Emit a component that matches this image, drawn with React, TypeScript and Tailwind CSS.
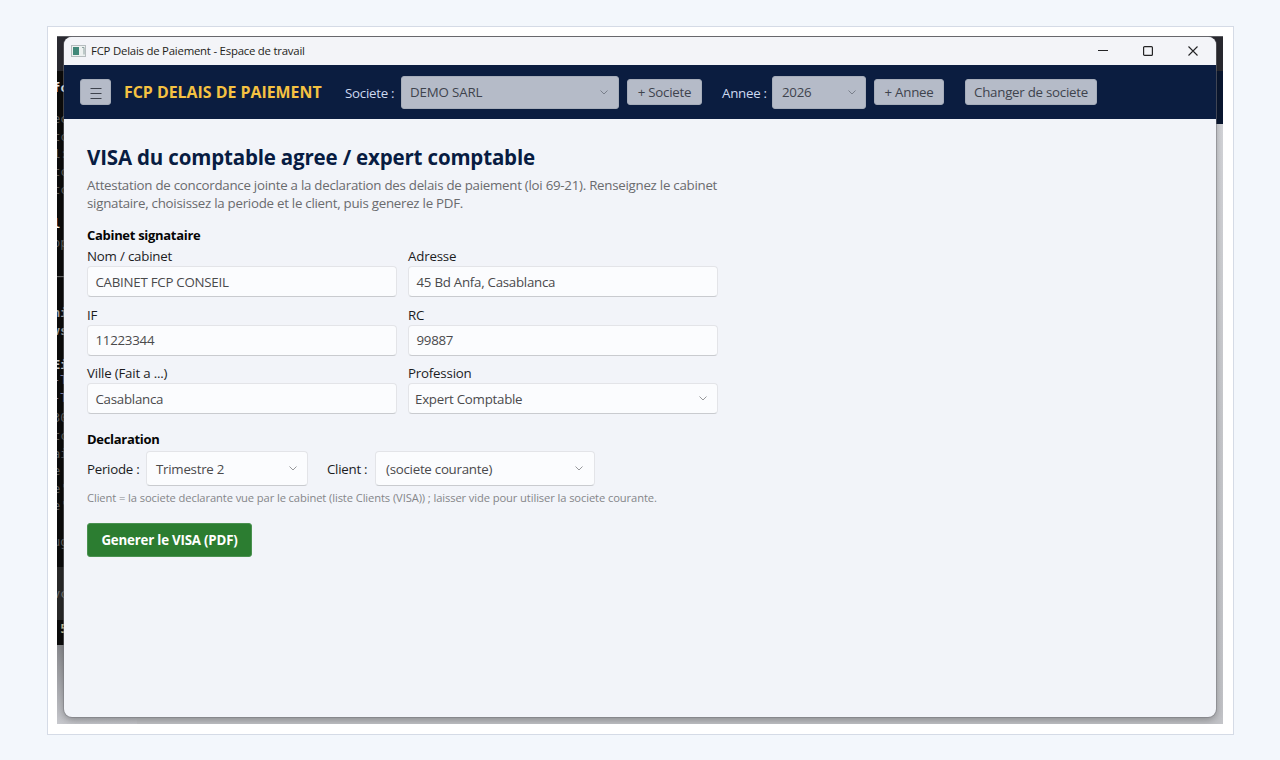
import type { ReactNode } from "react";

// Console lines that stick out on the left of the window
const consoleLines = [
  { y: 52, text: "fc", color: "#f2f2f2", bold: true },
  { y: 83, text: "ec", color: "#606060" },
  { y: 101, text: "tc", color: "#606060" },
  { y: 118, text: "1:", color: "#606060" },
  { y: 136, text: "tc", color: "#606060" },
  { y: 154, text: "tc", color: "#606060" },
  { y: 188, text: "l", color: "#ffffff", bold: true },
  { y: 207, text: "op", color: "#606060" },
  { y: 241, text: "──", color: "#777777" },
  { y: 277, text: "ni", color: "#a5a5a5", bold: true },
  { y: 295, text: "vs", color: "#a5a5a5", bold: true },
  { y: 329, text: "Ei", color: "#d0d0d0", bold: true },
  { y: 344, text: "-T", color: "#8585aa" },
  { y: 362, text: "-T", color: "#8585aa" },
  { y: 382, text: "30", color: "#606060" },
  { y: 400, text: "tc", color: "#606060" },
  { y: 418, text: "ai", color: "#606060" },
  { y: 435, text: "e", color: "#606060" },
  { y: 453, text: "e'", color: "#606060" },
  { y: 470, text: "e'", color: "#606060" },
  { y: 506, text: "ug", color: "#606060" },
  { y: 558, text: "vc", color: "#777777" },
  { y: 593, text: " 5", color: "#d8c89a", bold: true },
];

function Chevron({ className = "" }: { className?: string }) {
  return (
    <svg width="8" height="5" viewBox="0 0 8 5" fill="none" className={className}>
      <path d="M0.5 0.5 L4 4 L7.5 0.5" stroke="currentColor" strokeWidth="0.9" />
    </svg>
  );
}

function Field({ label, children }: { label: string; children: ReactNode }) {
  return (
    <div>
      <div className="h-5 leading-5 text-[#1c1c1e] tracking-[-0.2px]">{label}</div>
      {children}
    </div>
  );
}

function Input({ value }: { value: string }) {
  return (
    <div className="flex h-[31px] items-center rounded border border-[#e3e4e8] border-b-[#c9cbcf] bg-[#fbfcfe] pl-[7.5px] pt-[2px] text-[#4a4a4c]">
      {value}
    </div>
  );
}

function HeaderButton({ children, className }: { children: ReactNode; className: string }) {
  return (
    <button className={`flex h-[26px] items-center justify-center rounded-[3px] border border-[#a6adba] bg-[#b5bbc8] pt-[2px] text-[#3e434d] whitespace-nowrap ${className}`}>
      {children}
    </button>
  );
}

export default function App() {
  return (
    <main className="h-[760px] w-[1280px] overflow-hidden bg-[#f3f7fc] pl-[47px] pt-[26px] font-['Open_Sans','Noto_Sans',sans-serif] text-[13.3px] tracking-[-0.26px]">
      <div className="h-[709px] w-[1187px] border border-[#d5dbe6] bg-white p-[9px]">
        <div className="relative h-[688px] w-[1166px] overflow-hidden bg-[#c3c4c8]">
          <div className="absolute left-0 top-0 h-[609px] w-20 overflow-hidden bg-[#0c0c0c] font-['DejaVu_Sans_Mono',monospace] text-xs tracking-normal">
            <div className="h-[35px] bg-[#2b2b32]" />
            <div className="mt-[496px] h-[53px] bg-[#292929]" />
            {consoleLines.map((l) => (
              <span
                key={l.y}
                className={`absolute -left-[4px] whitespace-pre leading-4 ${l.bold ? "font-bold" : ""}`}
                style={{ top: l.y - 8, color: l.color }}
              >
                {l.text}
              </span>
            ))}
          </div>
          <div className="absolute left-0 top-[609px] h-[79px] w-20 bg-linear-to-b from-[#8b8c90] to-[#c8c9ce]" />
          <div className="absolute right-0 top-0 h-[35px] w-20 bg-[#2a2a30]" />
          <div className="absolute right-0 top-[35px] h-[53px] w-20 bg-[#0a1731]" />
          <div className="absolute right-0 top-[88px] h-[600px] w-20 bg-linear-to-b from-[#d5d6da] via-[#c9cace] to-[#c3c4c8]" />
          <div className="absolute left-0 top-0 h-px w-full bg-[#5c5d62]" />

          <div className="absolute left-[7px] top-px h-[680px] w-[1152px] overflow-hidden rounded-lg bg-[#f2f4f9] shadow-[0_0_0_1px_#77787d80,0_3px_8px_#00000050]">
            <div className="flex h-7 items-center justify-between bg-[#f3f4f8] pl-[7px]">
              <div className="flex items-center text-[11.4px] tracking-[-0.23px] text-[#1e1e20]">
                <svg width="15" height="12" viewBox="0 0 15 12">
                  <rect x="0.5" y="0.5" width="14" height="11" fill="#edf1f0" stroke="#b5bcbe" />
                  <rect x="2" y="2" width="6" height="8" fill="#418879" />
                  <path d="M11 2.5h2v7" fill="none" stroke="#8da2a0" />
                </svg>
                <span className="ml-[5px] whitespace-nowrap">FCP Delais de Paiement - Espace de travail</span>
              </div>
              <div className="flex items-center gap-[35px] pr-[18px] text-[#242426]">
                <svg width="10" height="10" viewBox="0 0 10 10" fill="none" stroke="currentColor">
                  <path d="M0 4.5h10" />
                </svg>
                <svg width="10" height="10" viewBox="0 0 10 10" fill="none" stroke="currentColor" strokeWidth="1.2">
                  <rect x="0.6" y="0.6" width="8.8" height="8.8" rx="1" />
                </svg>
                <svg width="10" height="10" viewBox="0 0 10 10" fill="none" stroke="currentColor" strokeWidth="1.1">
                  <path d="M0.5 0.5l9 9M9.5 0.5l-9 9" />
                </svg>
              </div>
            </div>

            <header className="flex h-[54px] items-center bg-[#0b1d40] pl-4">
              <HeaderButton className="w-[31px]">
                <svg width="12" height="12" viewBox="0 0 12 12" stroke="currentColor" strokeWidth="1.1">
                  <path d="M0.5 1.5h11M0.5 6.5h11M0.5 11.5h11" />
                </svg>
              </HeaderButton>
              <span className="ml-[13px] w-[221px] whitespace-nowrap pt-[2px] text-[15.9px] font-bold tracking-normal text-[#f5c242]">FCP DELAIS DE PAIEMENT</span>
              <span className="w-[56px] whitespace-nowrap pt-[3px] text-[#cdd9f0]">Societe :</span>
              <div className="flex h-[33px] w-[218px] items-center justify-between rounded-[3px] border border-[#a6adba] bg-[#b5bbc8] pl-2 pr-[10px] text-[#3e434d]">
                <span className="pt-[2px] tracking-[-0.15px]">DEMO SARL</span>
                <Chevron className="text-[#727883]" />
              </div>
              <HeaderButton className="ml-2 w-[75px]">+ Societe</HeaderButton>
              <span className="ml-5 w-[50px] whitespace-nowrap pt-[3px] text-[#cdd9f0]">Annee :</span>
              <div className="flex h-[33px] w-[94px] items-center justify-between rounded-[3px] border border-[#a6adba] bg-[#b5bbc8] px-[9px] text-[#3e434d]">
                <span className="pt-[2px]">2026</span>
                <Chevron className="text-[#727883]" />
              </div>
              <HeaderButton className="ml-2 w-[70px]">+ Annee</HeaderButton>
              <HeaderButton className="ml-[21px] w-[132px]">Changer de societe</HeaderButton>
            </header>

            <section className="pl-[23px] pt-6">
              <h1 className="h-7 whitespace-nowrap text-[20.5px] font-bold leading-7 tracking-[-0.17px] text-[#081c42]">
                VISA du comptable agree / expert comptable
              </h1>
              <p className="mt-[6px] whitespace-nowrap leading-[17.5px] text-[#6a6b6e]">
                Attestation de concordance jointe a la declaration des delais de paiement (loi 69-21). Renseignez le cabinet
                <br />
                signataire, choisissez la periode et le client, puis generez le PDF.
              </p>

              <h2 className="mt-[13px] h-5 text-[13px] font-bold leading-5 tracking-[-0.3px] text-[#050505]">Cabinet signataire</h2>
              <div className="mt-[1px] grid grid-cols-[310px_310px] gap-x-[11px] gap-y-[7.5px]">
                <Field label="Nom / cabinet">
                  <Input value="CABINET FCP CONSEIL" />
                </Field>
                <Field label="Adresse">
                  <Input value="45 Bd Anfa, Casablanca" />
                </Field>
                <Field label="IF">
                  <Input value="11223344" />
                </Field>
                <Field label="RC">
                  <Input value="99887" />
                </Field>
                <Field label="Ville (Fait a ...)">
                  <Input value="Casablanca" />
                </Field>
                <Field label="Profession">
                  <div className="flex h-[31px] items-center justify-between rounded border border-[#e3e4e8] border-b-[#c9cbcf] bg-[#fbfcfe] pl-[6px] pr-[10px] text-[#4a4a4c]">
                    <span className="pt-[2px]">Expert Comptable</span>
                    <Chevron className="text-[#8b8c90]" />
                  </div>
                </Field>
              </div>

              <h2 className="mt-[15px] h-5 text-[13px] font-bold leading-5 tracking-[-0.3px] text-[#050505]">Declaration</h2>
              <div className="mt-[2px] flex h-[35px] items-center whitespace-nowrap text-[#1c1c1e]">
                <span className="w-[59px] pt-[2px]">Periode :</span>
                <div className="flex h-[35px] w-[162px] items-center justify-between rounded border border-[#e3e4e8] border-b-[#c9cbcf] bg-[#fbfcfe] pl-[9px] pr-[10px] text-[#4a4a4c]">
                  <span className="pt-[2px]">Trimestre 2</span>
                  <Chevron className="text-[#8b8c90]" />
                </div>
                <span className="ml-[19px] w-[48px] pt-[2px]">Client :</span>
                <div className="flex h-[35px] w-[220px] items-center justify-between rounded border border-[#e3e4e8] border-b-[#c9cbcf] bg-[#fbfcfe] pl-[10px] pr-[11px] text-[#4a4a4c]">
                  <span className="pt-[2px]">(societe courante)</span>
                  <Chevron className="text-[#8b8c90]" />
                </div>
              </div>
              <p className="mt-[4px] h-4 whitespace-nowrap text-[11.2px] leading-4 tracking-[-0.11px] text-[#858689]">
                Client = la societe declarante vue par le cabinet (liste Clients (VISA)) ; laisser vide pour utiliser la societe courante.
              </p>
              <button className="mt-[17px] flex h-[34px] w-[165px] items-center justify-center whitespace-nowrap rounded-[3px] border border-[#4a9150] bg-[#2c7d31] pt-[2px] font-bold tracking-[-0.2px] text-white">
                Generer le VISA (PDF)
              </button>
            </section>
          </div>
        </div>
      </div>
    </main>
  );
}
